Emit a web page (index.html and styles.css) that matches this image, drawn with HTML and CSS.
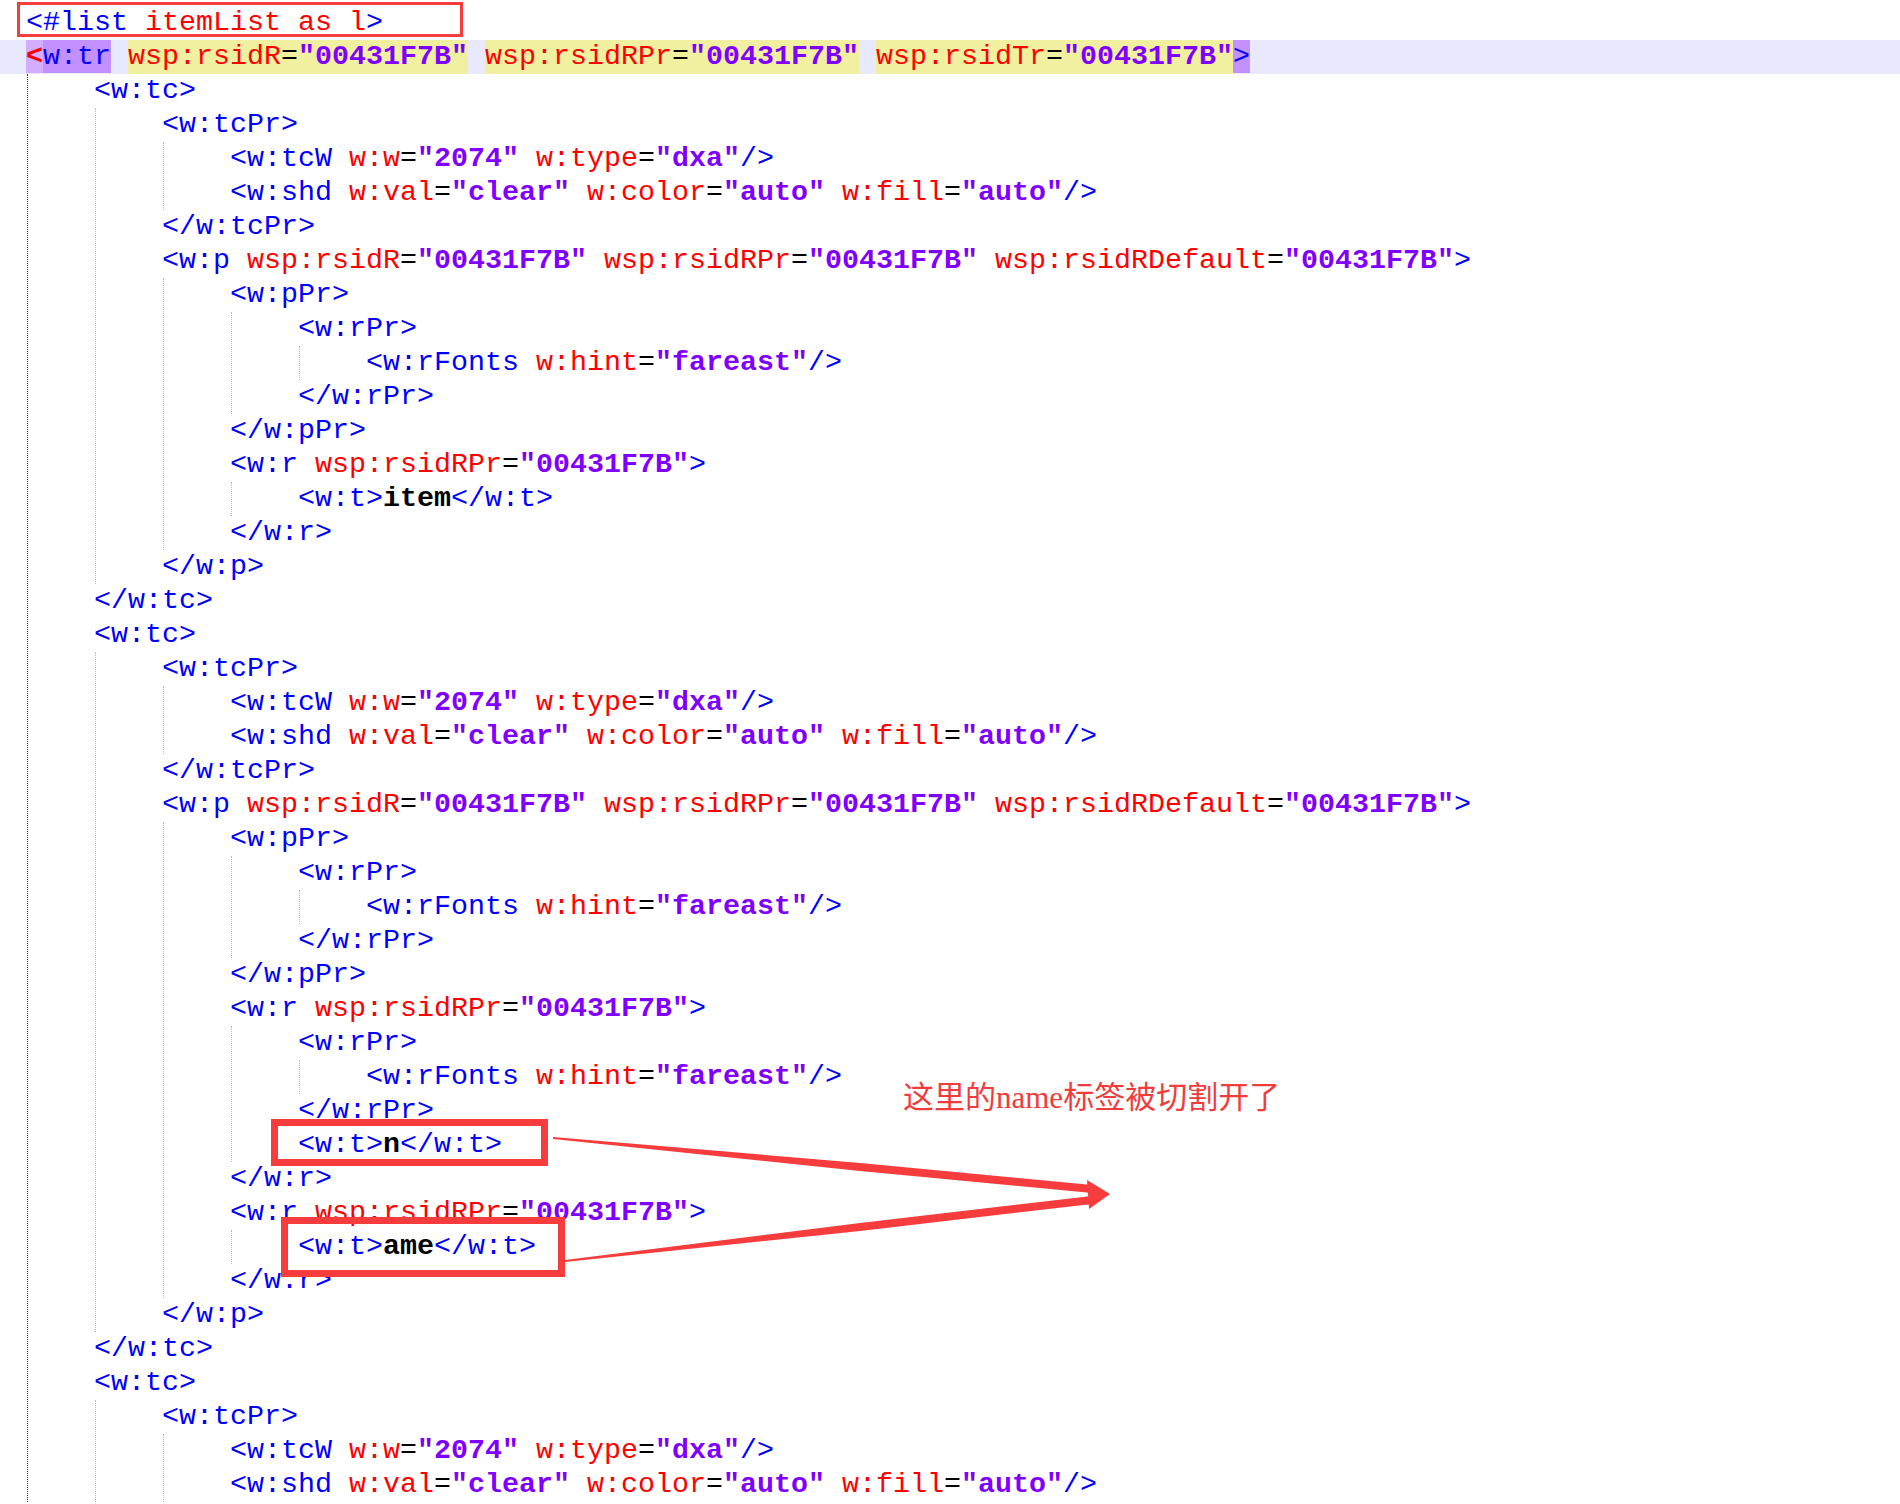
FILE: index.html
```html
<!DOCTYPE html>
<html lang="zh-CN">
<head>
    <meta charset="UTF-8">
    <title>itemList template</title>
    <link rel="stylesheet" href="styles.css">
</head>
<body>
<div class="page">
    <div class="ln"><span class="tag">&lt;#list</span><span class="at"> itemList as l</span><span class="tag">&gt;</span></div>
    <div class="ln hl"><span class="match-lt">&lt;</span><span class="tag match">w:tr</span> <span class="yel"><span class="at">wsp:rsidR</span>=<span class="val">"00431F7B"</span></span> <span class="yel"><span class="at">wsp:rsidRPr</span>=<span class="val">"00431F7B"</span></span> <span class="yel"><span class="at">wsp:rsidTr</span>=<span class="val">"00431F7B"</span></span><span class="tag match">&gt;</span></div>
    <div class="kids root">

        <!-- first cell -->
        <div class="ln"><span class="tag">&lt;w:tc&gt;</span></div>
        <div class="kids">
            <div class="ln"><span class="tag">&lt;w:tcPr&gt;</span></div>
            <div class="kids">
                <div class="ln"><span class="tag">&lt;w:tcW</span> <span class="at">w:w</span>=<span class="val">"2074"</span> <span class="at">w:type</span>=<span class="val">"dxa"</span><span class="tag">/&gt;</span></div>
                <div class="ln"><span class="tag">&lt;w:shd</span> <span class="at">w:val</span>=<span class="val">"clear"</span> <span class="at">w:color</span>=<span class="val">"auto"</span> <span class="at">w:fill</span>=<span class="val">"auto"</span><span class="tag">/&gt;</span></div>
            </div>
            <div class="ln"><span class="tag">&lt;/w:tcPr&gt;</span></div>
            <div class="ln"><span class="tag">&lt;w:p</span> <span class="at">wsp:rsidR</span>=<span class="val">"00431F7B"</span> <span class="at">wsp:rsidRPr</span>=<span class="val">"00431F7B"</span> <span class="at">wsp:rsidRDefault</span>=<span class="val">"00431F7B"</span><span class="tag">&gt;</span></div>
            <div class="kids">
                <div class="ln"><span class="tag">&lt;w:pPr&gt;</span></div>
                <div class="kids">
                    <div class="ln"><span class="tag">&lt;w:rPr&gt;</span></div>
                    <div class="kids">
                        <div class="ln"><span class="tag">&lt;w:rFonts</span> <span class="at">w:hint</span>=<span class="val">"fareast"</span><span class="tag">/&gt;</span></div>
                    </div>
                    <div class="ln"><span class="tag">&lt;/w:rPr&gt;</span></div>
                </div>
                <div class="ln"><span class="tag">&lt;/w:pPr&gt;</span></div>
                <div class="ln"><span class="tag">&lt;w:r</span> <span class="at">wsp:rsidRPr</span>=<span class="val">"00431F7B"</span><span class="tag">&gt;</span></div>
                <div class="kids">
                    <div class="ln"><span class="tag">&lt;w:t&gt;</span><span class="txt">item</span><span class="tag">&lt;/w:t&gt;</span></div>
                </div>
                <div class="ln"><span class="tag">&lt;/w:r&gt;</span></div>
            </div>
            <div class="ln"><span class="tag">&lt;/w:p&gt;</span></div>
        </div>
        <div class="ln"><span class="tag">&lt;/w:tc&gt;</span></div>

        <!-- second cell, the split one -->
        <div class="ln"><span class="tag">&lt;w:tc&gt;</span></div>
        <div class="kids">
            <div class="ln"><span class="tag">&lt;w:tcPr&gt;</span></div>
            <div class="kids">
                <div class="ln"><span class="tag">&lt;w:tcW</span> <span class="at">w:w</span>=<span class="val">"2074"</span> <span class="at">w:type</span>=<span class="val">"dxa"</span><span class="tag">/&gt;</span></div>
                <div class="ln"><span class="tag">&lt;w:shd</span> <span class="at">w:val</span>=<span class="val">"clear"</span> <span class="at">w:color</span>=<span class="val">"auto"</span> <span class="at">w:fill</span>=<span class="val">"auto"</span><span class="tag">/&gt;</span></div>
            </div>
            <div class="ln"><span class="tag">&lt;/w:tcPr&gt;</span></div>
            <div class="ln"><span class="tag">&lt;w:p</span> <span class="at">wsp:rsidR</span>=<span class="val">"00431F7B"</span> <span class="at">wsp:rsidRPr</span>=<span class="val">"00431F7B"</span> <span class="at">wsp:rsidRDefault</span>=<span class="val">"00431F7B"</span><span class="tag">&gt;</span></div>
            <div class="kids">
                <div class="ln"><span class="tag">&lt;w:pPr&gt;</span></div>
                <div class="kids">
                    <div class="ln"><span class="tag">&lt;w:rPr&gt;</span></div>
                    <div class="kids">
                        <div class="ln"><span class="tag">&lt;w:rFonts</span> <span class="at">w:hint</span>=<span class="val">"fareast"</span><span class="tag">/&gt;</span></div>
                    </div>
                    <div class="ln"><span class="tag">&lt;/w:rPr&gt;</span></div>
                </div>
                <div class="ln"><span class="tag">&lt;/w:pPr&gt;</span></div>
                <div class="ln"><span class="tag">&lt;w:r</span> <span class="at">wsp:rsidRPr</span>=<span class="val">"00431F7B"</span><span class="tag">&gt;</span></div>
                <div class="kids">
                    <div class="ln"><span class="tag">&lt;w:rPr&gt;</span></div>
                    <div class="kids">
                        <div class="ln"><span class="tag">&lt;w:rFonts</span> <span class="at">w:hint</span>=<span class="val">"fareast"</span><span class="tag">/&gt;</span></div>
                    </div>
                    <div class="ln"><span class="tag">&lt;/w:rPr&gt;</span></div>
                    <div class="ln"><span class="tag">&lt;w:t&gt;</span><span class="txt">n</span><span class="tag">&lt;/w:t&gt;</span></div>
                </div>
                <div class="ln"><span class="tag">&lt;/w:r&gt;</span></div>
                <div class="ln"><span class="tag">&lt;w:r</span> <span class="at">wsp:rsidRPr</span>=<span class="val">"00431F7B"</span><span class="tag">&gt;</span></div>
                <div class="kids">
                    <div class="ln"><span class="tag">&lt;w:t&gt;</span><span class="txt">ame</span><span class="tag">&lt;/w:t&gt;</span></div>
                </div>
                <div class="ln"><span class="tag">&lt;/w:r&gt;</span></div>
            </div>
            <div class="ln"><span class="tag">&lt;/w:p&gt;</span></div>
        </div>
        <div class="ln"><span class="tag">&lt;/w:tc&gt;</span></div>

        <!-- third cell (runs off the bottom) -->
        <div class="ln"><span class="tag">&lt;w:tc&gt;</span></div>
        <div class="kids">
            <div class="ln"><span class="tag">&lt;w:tcPr&gt;</span></div>
            <div class="kids">
                <div class="ln"><span class="tag">&lt;w:tcW</span> <span class="at">w:w</span>=<span class="val">"2074"</span> <span class="at">w:type</span>=<span class="val">"dxa"</span><span class="tag">/&gt;</span></div>
                <div class="ln"><span class="tag">&lt;w:shd</span> <span class="at">w:val</span>=<span class="val">"clear"</span> <span class="at">w:color</span>=<span class="val">"auto"</span> <span class="at">w:fill</span>=<span class="val">"auto"</span><span class="tag">/&gt;</span></div>
            </div>
        </div>
    </div>

    <!-- annotations drawn on top -->
    <div class="mark mark-list"></div>
    <div class="mark mark-n"></div>
    <div class="mark mark-ame"></div>
    <div class="note">这里的name标签被切割开了</div>
    <svg class="arrow" width="1900" height="1504" viewBox="0 0 1900 1504">
        <polygon points="553,1137 860,1163 1092,1185 1092,1193 860,1171 553,1139" fill="#f63c3c"/>
        <polygon points="565,1260 860,1223 1092,1196 1092,1204 860,1231 565,1262" fill="#f63c3c"/>
        <polygon points="1087,1180 1110,1194 1089,1209" fill="#f63c3c"/>
    </svg>
</div>
</body>
</html>
```

FILE: styles.css
```css
body {
    margin: 0;
    background-color: #ffffff;
    font-family: "Liberation Mono", "Courier New", monospace;
    font-size: 28.33px;
    line-height: 34px;
    color: #000000;
}

.page {
    position: relative;
    height: 1504px;
    overflow: hidden;
    box-sizing: border-box;
    padding: 6px 0 0 26px;
}

.ln {
    height: 34px;
    white-space: pre;
}

.kids {
    margin-left: 1px;
    padding-left: 66px;
    border-left: 1px dotted #b8b8b8;
}

.kids.root {
    border-left-color: #c00000;
}

/* current line band */
.hl {
    margin-left: -26px;
    padding-left: 26px;
    background-color: #e8e8ff;
}

.tag {
    color: #0000ff;
}

.at {
    color: #ff0000;
}

.val {
    color: #8000ff;
    font-weight: bold;
}

.txt {
    color: #000000;
    font-weight: bold;
}

.yel {
    display: inline-block;
    height: 34px;
    background-color: #f0f0a0;
}

.match {
    background-color: #c390ff;
}

.match-lt {
    color: #ff0000;
    font-weight: bold;
    background-color: #d3adff;
}

/* red marks */
.mark {
    position: absolute;
    box-sizing: border-box;
    border: 7px solid #f63c3c;
}

.mark-list {
    left: 17px;
    top: 2px;
    width: 446px;
    height: 35px;
    border-width: 3px;
}

.mark-n {
    left: 271px;
    top: 1119px;
    width: 277px;
    height: 47px;
}

.mark-ame {
    left: 281px;
    top: 1217px;
    width: 284px;
    height: 60px;
}

.note {
    position: absolute;
    left: 903px;
    top: 1082px;
    font-family: "Liberation Serif", "Noto Sans CJK SC", serif;
    font-size: 31px;
    line-height: 31px;
    color: #f03c3c;
    white-space: nowrap;
}

.arrow {
    position: absolute;
    left: 0;
    top: 0;
}
```
